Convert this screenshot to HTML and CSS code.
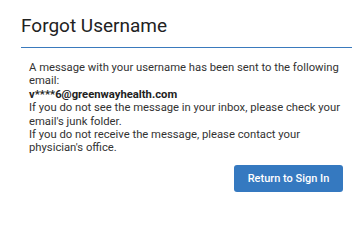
FILE: index.html
```html
<!DOCTYPE html>
<html>
<head>
<meta charset="utf-8">
<link rel="stylesheet" href="styles.css">
</head>
<body>
<div class="panel">
  <h1 class="title">Forgot Username</h1>
  <div class="content">
    <p class="msg">A message with your username has been sent to the following email:<br><strong>v****6@greenwayhealth.com</strong><br>If you do not see the message in your inbox, please check your email's junk folder.<br>If you do not receive the message, please contact your physician's office.</p>
    <div class="actions">
      <button class="btn">Return to Sign In</button>
    </div>
  </div>
</div>
</body>
</html>
```
FILE: styles.css
```css
html, body {
  margin: 0;
  padding: 0;
  background: #fff;
}
body {
  font-family: Roboto, "Liberation Sans", sans-serif;
  width: 364px;
  height: 209px;
  overflow: hidden;
}
.panel {
  margin-left: 21px;
  width: 331px;
  padding-top: 14px;
}
.title {
  margin: 0;
  font-size: 19px;
  font-weight: 400;
  line-height: 24px;
  color: #222;
  padding-bottom: 9px;
  border-bottom: 1px solid #3a7abd;
}
.content {
  padding: 0 9px 0 8px;
}
.msg {
  margin: 13px 0 0 0;
  font-size: 11.25px;
  line-height: 13.4px;
  color: #333;
}
.msg strong {
  font-weight: 700;
  color: #222;
}
.actions {
  display: flex;
  justify-content: flex-end;
  margin-top: 10px;
}
.btn {
  width: 109px;
  height: 27px;
  background: #3579c0;
  border: none;
  border-radius: 3px;
  color: #fff;
  font-family: Roboto, "Liberation Sans", sans-serif;
  font-size: 11px;
  font-weight: 500;
  padding: 0;
}
```
